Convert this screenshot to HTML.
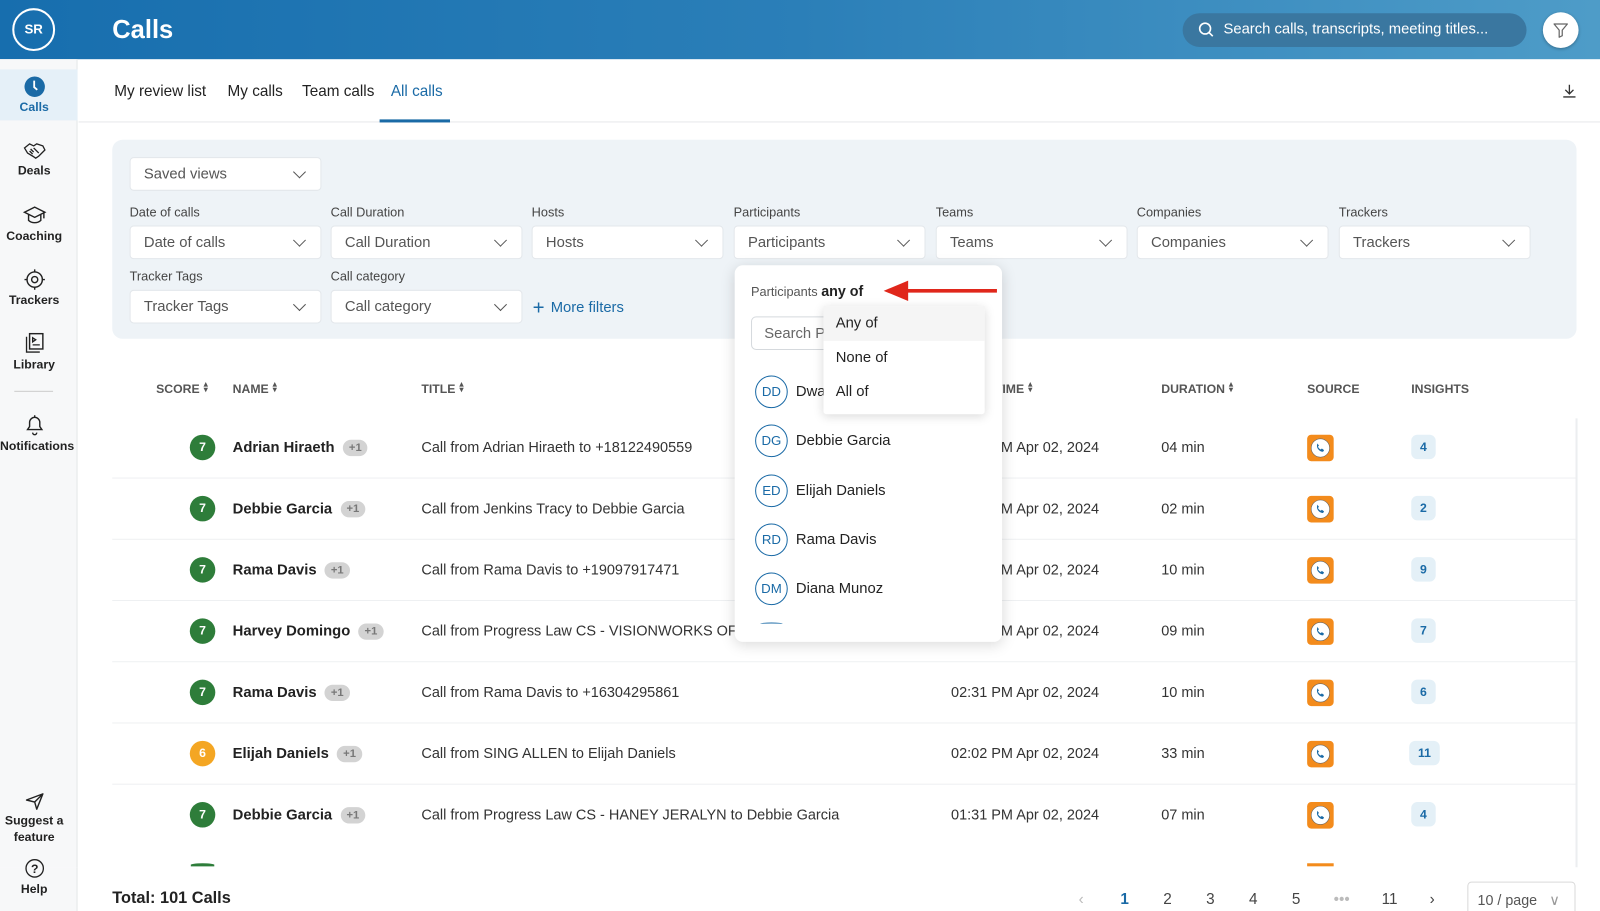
<!DOCTYPE html>
<html><head><meta charset="utf-8"><style>
*{box-sizing:border-box;margin:0;padding:0}
body{width:1600px;height:911px;overflow:hidden;background:#fff;font-family:"Liberation Sans",sans-serif;color:#222}
#w{position:absolute;left:0;top:0;width:1568px;height:893px;transform:scale(1.020408);transform-origin:0 0;overflow:hidden}
.a{position:absolute}
.hdr{left:0;top:0;width:1568px;height:58px;background:linear-gradient(90deg,#176eae,#2b7fb8 50%,#4e9cc8)}
.side{left:0;top:58px;width:76px;height:835px;background:#f7f8f9;border-right:1px solid #e4e6e8}
.si{position:absolute;left:0;width:67px;text-align:center;font-size:12px;font-weight:bold;color:#222}
.si svg{display:block;margin:0 auto 2px}
.tab{top:81px;font-size:15px;color:#222}
.panel{left:110px;top:137px;width:1435px;height:195px;background:#eef3f7;border-radius:10px}
.lbl{font-size:12.5px;color:#444}
.dd{width:188px;height:33px;background:#fff;border-radius:4px;border:1px solid #e3e7eb;font-size:14.5px;color:#555;padding:8px 13px}
.dd:after{content:"";position:absolute;right:16px;top:9px;width:8px;height:8px;border-right:1.5px solid #555;border-bottom:1.5px solid #555;transform:rotate(45deg)}
.th{top:374px;font-size:12px;font-weight:bold;color:#555}
.sort{display:inline-block;font-size:8px;vertical-align:1px;margin-left:4px;line-height:5px;width:6px}
.sc{width:25px;height:25px;border-radius:50%;background:#2e7d3a;color:#fff;font-size:12px;font-weight:bold;text-align:center;line-height:25px}
.nm{font-size:14.5px;font-weight:bold;color:#222}
.pl{display:inline-block;background:#d3d3d3;color:#777;font-size:11px;border-radius:9px;padding:2px 6px;margin-left:8px;vertical-align:1px;font-weight:bold}
.tt{font-size:14.2px;color:#333}
.src{width:26px;height:26px;background:#f38b1c;border-radius:4px}
.src svg{position:absolute;left:3px;top:3px}
.ins{width:24px;height:24px;background:#e4f0f7;border-radius:6px;color:#1a6aa6;font-size:12px;font-weight:bold;text-align:center;line-height:24px}
.line{height:1px;background:#eef0f2}
.pop{left:720px;top:260px;width:262px;height:369px;background:#fff;border-radius:8px;box-shadow:0 3px 14px rgba(0,0,0,.15);overflow:hidden}
.av{width:32px;height:32px;border-radius:50%;border:1.3px solid #1a6aa6;color:#1a6aa6;font-size:13px;text-align:center;line-height:29px}
.pn{font-size:14.5px;color:#222}
.sub{left:807px;top:300px;width:158px;height:106px;background:#fff;box-shadow:0 2px 10px rgba(0,0,0,.15);border-radius:3px}
.sub div{height:33.5px;padding:9px 12px;font-size:14.5px;color:#222}
.pg{top:873px;font-size:15px;color:#444}
</style></head><body><div id="w">
<div class="a hdr"></div>
<div class="a" style="left:12px;top:8px;width:42px;height:42px;border:2px solid #fff;border-radius:50%;color:#fff;font-size:13px;font-weight:bold;text-align:center;line-height:38px">SR</div>
<div class="a" style="left:110px;top:15px;color:#fff;font-size:25px;font-weight:bold">Calls</div>
<div class="a" style="left:1159px;top:13px;width:337px;height:33px;border-radius:17px;background:#3a77a0"></div>
<svg class="a" style="left:1174px;top:21px" width="16" height="16" viewBox="0 0 16 16"><circle cx="7" cy="7" r="5.3" fill="none" stroke="#fff" stroke-width="1.6"/><path d="M11 11l3.5 3.5" stroke="#fff" stroke-width="1.6"/></svg>
<div class="a" style="left:1199px;top:21px;color:#fff;font-size:14.5px">Search calls, transcripts, meeting titles...</div>
<div class="a" style="left:1512px;top:12px;width:35px;height:35px;border-radius:50%;background:#fff;box-shadow:0 1px 3px rgba(0,0,0,.3)"></div>
<svg class="a" style="left:1521px;top:21px" width="17" height="17" viewBox="0 0 17 17"><path d="M2 2.5h13l-5 6v5.5l-3 1.5v-7z" fill="none" stroke="#666" stroke-width="1.2" stroke-linejoin="round"/></svg>

<div class="a side"></div>
<div class="a" style="left:0;top:68px;width:76px;height:50px;background:#e5f0f8"></div>
<div class="si" style="top:74px;color:#1a6aa6"><svg width="22" height="22" viewBox="0 0 22 22"><circle cx="11" cy="11" r="10" fill="#1a6aa6"/><path d="M10.5 5v6.5l3 2.5" stroke="#fff" stroke-width="1.8" fill="none"/></svg>Calls</div>
<div class="si" style="top:138px"><svg width="24" height="20" viewBox="0 0 24 20"><path d="M2 7l5-4 4 2 3-2 6 2 2 4-6 6-3 2-3-2-5-3zM8 8l3 3M11 7l5 5M7 10l3 3" fill="none" stroke="#222" stroke-width="1.3"/></svg>Deals</div>
<div class="si" style="top:200px"><svg width="24" height="22" viewBox="0 0 24 22"><path d="M12 3L2 8l10 5 10-5zM6 10v6c3 3 9 3 12 0v-6M21 8v6" fill="none" stroke="#222" stroke-width="1.4"/></svg>Coaching</div>
<div class="si" style="top:263px"><svg width="24" height="22" viewBox="0 0 24 22"><circle cx="12" cy="11" r="7.5" fill="none" stroke="#222" stroke-width="1.4"/><circle cx="12" cy="11" r="3" fill="none" stroke="#222" stroke-width="1.4"/><path d="M12 1v3M12 18v3M2 11h3M19 11h3" stroke="#222" stroke-width="1.4"/></svg>Trackers</div>
<div class="si" style="top:325px"><svg width="24" height="23" viewBox="0 0 24 23"><rect x="7" y="2" width="13" height="15" fill="none" stroke="#222" stroke-width="1.4"/><path d="M4 5v15h13M10 6l3 2-3 2zM10 13h7" fill="none" stroke="#222" stroke-width="1.3"/></svg>Library</div>
<div class="a" style="left:14px;top:383px;width:38px;height:1px;background:#ccc"></div>
<div class="si" style="top:405px"><svg width="24" height="23" viewBox="0 0 24 23"><path d="M5 16h14l-2-3V9a5 5 0 0 0-10 0v4zM10 19a2 2 0 0 0 4 0M12 2v2" fill="none" stroke="#222" stroke-width="1.4"/></svg>Notifications</div>
<div class="si" style="top:776px;line-height:16px"><svg width="20" height="18" viewBox="0 0 20 18"><path d="M2 8L18 2 12 17 10 10zM10 10l8-8" fill="none" stroke="#222" stroke-width="1.4" stroke-linejoin="round"/></svg>Suggest a<br>feature</div>

<div class="a tab" style="left:112px">My review list</div>
<div class="a tab" style="left:223px">My calls</div>
<div class="a tab" style="left:296px">Team calls</div>
<div class="a tab" style="left:383px;color:#1a6aa6">All calls</div>
<div class="a" style="left:77px;top:119px;width:1491px;height:1px;background:#e6e8ea"></div>
<div class="a" style="left:372px;top:117px;width:69px;height:3px;background:#1a6aa6"></div>
<svg class="a" style="left:1530px;top:81px" width="16" height="16" viewBox="0 0 16 16"><path d="M8 2v9M4 7l4 4 4-4M2 14h12" fill="none" stroke="#333" stroke-width="1.3"/></svg>

<div class="a panel"></div>
<div class="a dd" style="left:127px;top:154px">Saved views</div>
<div class="a lbl" style="left:127px;top:201px">Date of calls</div><div class="a dd" style="left:127px;top:221px">Date of calls</div>
<div class="a lbl" style="left:324px;top:201px">Call Duration</div><div class="a dd" style="left:324px;top:221px">Call Duration</div>
<div class="a lbl" style="left:521px;top:201px">Hosts</div><div class="a dd" style="left:521px;top:221px">Hosts</div>
<div class="a lbl" style="left:719px;top:201px">Participants</div><div class="a dd" style="left:719px;top:221px">Participants</div>
<div class="a lbl" style="left:917px;top:201px">Teams</div><div class="a dd" style="left:917px;top:221px">Teams</div>
<div class="a lbl" style="left:1114px;top:201px">Companies</div><div class="a dd" style="left:1114px;top:221px">Companies</div>
<div class="a lbl" style="left:1312px;top:201px">Trackers</div><div class="a dd" style="left:1312px;top:221px">Trackers</div>
<div class="a lbl" style="left:127px;top:264px">Tracker Tags</div><div class="a dd" style="left:127px;top:284px">Tracker Tags</div>
<div class="a lbl" style="left:324px;top:264px">Call category</div><div class="a dd" style="left:324px;top:284px">Call category</div>
<div class="a" style="left:522px;top:291px;font-size:14.5px;color:#1a6aa6"><span style="font-size:20px;vertical-align:-2px;margin-right:6px">+</span>More filters</div>

<div class="a th" style="left:153px">SCORE<span class="sort">▴<br>▾</span></div>
<div class="a th" style="left:228px">NAME<span class="sort">▴<br>▾</span></div>
<div class="a th" style="left:413px">TITLE<span class="sort">▴<br>▾</span></div>
<div class="a th" style="left:975px">TIME<span class="sort">▴<br>▾</span></div>
<div class="a th" style="left:1138px">DURATION<span class="sort">▴<br>▾</span></div>
<div class="a th" style="left:1281px">SOURCE</div>
<div class="a th" style="left:1383px">INSIGHTS</div>
<div class="a" style="left:1544px;top:410px;width:2px;height:440px;background:#eceef0"></div>

<div class="a sc" style="left:186px;top:426px">7</div><div class="a nm" style="left:228px;top:431px">Adrian Hiraeth<span class="pl">+1</span></div><div class="a tt" style="left:413px;top:431px">Call from Adrian Hiraeth to +18122490559</div><div class="a tt" style="left:932px;top:431px">02:31 PM Apr 02, 2024</div><div class="a tt" style="left:1138px;top:431px">04 min</div><div class="a src" style="left:1281px;top:426px"><svg width="20" height="20" viewBox="0 0 20 20"><circle cx="10" cy="10" r="9" fill="#fff" stroke="#666" stroke-width=".6"/><path d="M7 5.5l1.6 2.2-1 1c.5 1.3 1.5 2.3 2.8 2.8l1-1 2.2 1.6-1 1.6c-3 .2-6.2-3-6-6z" fill="#1a6aa6"/></svg></div><div class="a ins" style="left:1383px;top:426px">4</div>
<div class="a line" style="left:110px;top:468px;width:1434px"></div>
<div class="a sc" style="left:186px;top:486px">7</div><div class="a nm" style="left:228px;top:491px">Debbie Garcia<span class="pl">+1</span></div><div class="a tt" style="left:413px;top:491px">Call from Jenkins Tracy to Debbie Garcia</div><div class="a tt" style="left:932px;top:491px">02:31 PM Apr 02, 2024</div><div class="a tt" style="left:1138px;top:491px">02 min</div><div class="a src" style="left:1281px;top:486px"><svg width="20" height="20" viewBox="0 0 20 20"><circle cx="10" cy="10" r="9" fill="#fff" stroke="#666" stroke-width=".6"/><path d="M7 5.5l1.6 2.2-1 1c.5 1.3 1.5 2.3 2.8 2.8l1-1 2.2 1.6-1 1.6c-3 .2-6.2-3-6-6z" fill="#1a6aa6"/></svg></div><div class="a ins" style="left:1383px;top:486px">2</div>
<div class="a line" style="left:110px;top:528px;width:1434px"></div>
<div class="a sc" style="left:186px;top:546px">7</div><div class="a nm" style="left:228px;top:551px">Rama Davis<span class="pl">+1</span></div><div class="a tt" style="left:413px;top:551px">Call from Rama Davis to +19097917471</div><div class="a tt" style="left:932px;top:551px">02:31 PM Apr 02, 2024</div><div class="a tt" style="left:1138px;top:551px">10 min</div><div class="a src" style="left:1281px;top:546px"><svg width="20" height="20" viewBox="0 0 20 20"><circle cx="10" cy="10" r="9" fill="#fff" stroke="#666" stroke-width=".6"/><path d="M7 5.5l1.6 2.2-1 1c.5 1.3 1.5 2.3 2.8 2.8l1-1 2.2 1.6-1 1.6c-3 .2-6.2-3-6-6z" fill="#1a6aa6"/></svg></div><div class="a ins" style="left:1383px;top:546px">9</div>
<div class="a line" style="left:110px;top:588px;width:1434px"></div>
<div class="a sc" style="left:186px;top:606px">7</div><div class="a nm" style="left:228px;top:611px">Harvey Domingo<span class="pl">+1</span></div><div class="a tt" style="left:413px;top:611px">Call from Progress Law CS - VISIONWORKS OF</div><div class="a tt" style="left:932px;top:611px">02:31 PM Apr 02, 2024</div><div class="a tt" style="left:1138px;top:611px">09 min</div><div class="a src" style="left:1281px;top:606px"><svg width="20" height="20" viewBox="0 0 20 20"><circle cx="10" cy="10" r="9" fill="#fff" stroke="#666" stroke-width=".6"/><path d="M7 5.5l1.6 2.2-1 1c.5 1.3 1.5 2.3 2.8 2.8l1-1 2.2 1.6-1 1.6c-3 .2-6.2-3-6-6z" fill="#1a6aa6"/></svg></div><div class="a ins" style="left:1383px;top:606px">7</div>
<div class="a line" style="left:110px;top:648px;width:1434px"></div>
<div class="a sc" style="left:186px;top:666px">7</div><div class="a nm" style="left:228px;top:671px">Rama Davis<span class="pl">+1</span></div><div class="a tt" style="left:413px;top:671px">Call from Rama Davis to +16304295861</div><div class="a tt" style="left:932px;top:671px">02:31 PM Apr 02, 2024</div><div class="a tt" style="left:1138px;top:671px">10 min</div><div class="a src" style="left:1281px;top:666px"><svg width="20" height="20" viewBox="0 0 20 20"><circle cx="10" cy="10" r="9" fill="#fff" stroke="#666" stroke-width=".6"/><path d="M7 5.5l1.6 2.2-1 1c.5 1.3 1.5 2.3 2.8 2.8l1-1 2.2 1.6-1 1.6c-3 .2-6.2-3-6-6z" fill="#1a6aa6"/></svg></div><div class="a ins" style="left:1383px;top:666px">6</div>
<div class="a line" style="left:110px;top:708px;width:1434px"></div>
<div class="a sc" style="left:186px;top:726px;background:#f4a623">6</div><div class="a nm" style="left:228px;top:731px">Elijah Daniels<span class="pl">+1</span></div><div class="a tt" style="left:413px;top:731px">Call from SING ALLEN to Elijah Daniels</div><div class="a tt" style="left:932px;top:731px">02:02 PM Apr 02, 2024</div><div class="a tt" style="left:1138px;top:731px">33 min</div><div class="a src" style="left:1281px;top:726px"><svg width="20" height="20" viewBox="0 0 20 20"><circle cx="10" cy="10" r="9" fill="#fff" stroke="#666" stroke-width=".6"/><path d="M7 5.5l1.6 2.2-1 1c.5 1.3 1.5 2.3 2.8 2.8l1-1 2.2 1.6-1 1.6c-3 .2-6.2-3-6-6z" fill="#1a6aa6"/></svg></div><div class="a ins" style="left:1381px;top:726px;width:30px">11</div>
<div class="a line" style="left:110px;top:768px;width:1434px"></div>
<div class="a sc" style="left:186px;top:786px">7</div><div class="a nm" style="left:228px;top:791px">Debbie Garcia<span class="pl">+1</span></div><div class="a tt" style="left:413px;top:791px">Call from Progress Law CS - HANEY JERALYN to Debbie Garcia</div><div class="a tt" style="left:932px;top:791px">01:31 PM Apr 02, 2024</div><div class="a tt" style="left:1138px;top:791px">07 min</div><div class="a src" style="left:1281px;top:786px"><svg width="20" height="20" viewBox="0 0 20 20"><circle cx="10" cy="10" r="9" fill="#fff" stroke="#666" stroke-width=".6"/><path d="M7 5.5l1.6 2.2-1 1c.5 1.3 1.5 2.3 2.8 2.8l1-1 2.2 1.6-1 1.6c-3 .2-6.2-3-6-6z" fill="#1a6aa6"/></svg></div><div class="a ins" style="left:1383px;top:786px">4</div>
<div class="a" style="left:187px;top:846px;width:23px;height:3px;border-radius:50% 50% 0 0;background:#2e7d3a"></div>
<div class="a" style="left:1281px;top:846px;width:26px;height:3px;background:#f38b1c"></div>
<div class="a" style="left:0;top:850px;width:1568px;height:43px;background:#fff"></div>
<div class="a side" style="top:850px;height:43px"></div>
<div class="si" style="top:841px"><svg width="22" height="21" viewBox="0 0 22 21"><circle cx="11" cy="10" r="8.5" fill="none" stroke="#222" stroke-width="1.3"/><text x="11" y="14.5" font-size="12" text-anchor="middle" font-family="Liberation Sans" fill="#222">?</text></svg>Help</div>

<div class="a" style="left:110px;top:872px;font-size:16px;font-weight:bold;color:#222">Total: 101 Calls</div>
<div class="a pg" style="left:1057px;color:#bbb">‹</div>
<div class="a pg" style="left:1098px;color:#1a6aa6;font-weight:bold">1</div>
<div class="a pg" style="left:1140px">2</div>
<div class="a pg" style="left:1182px">3</div>
<div class="a pg" style="left:1224px">4</div>
<div class="a pg" style="left:1266px">5</div>
<div class="a pg" style="left:1307px;color:#bbb">•••</div>
<div class="a pg" style="left:1354px">11</div>
<div class="a pg" style="left:1401px">›</div>
<div class="a" style="left:1438px;top:864px;width:106px;height:34px;border:1px solid #d9d9d9;border-radius:4px;font-size:14px;color:#555;padding:9px 9px">10 / page <span style="color:#999;margin-left:8px">∨</span></div>

<div class="a pop"></div>
<div class="a" style="left:736px;top:277px;font-size:12.5px;color:#555">Participants <b style="font-size:14px;color:#222">any of</b></div>
<svg class="a" style="left:864px;top:272px" width="116" height="26" viewBox="0 0 116 26"><path d="M22 13H113" stroke="#e0271b" stroke-width="3.5"/><path d="M2 13L26 3v20z" fill="#e0271b"/></svg>
<div class="a" style="left:736px;top:310px;width:120px;height:33px;border:1px solid #d5d9dd;border-radius:5px;font-size:14.5px;color:#666;padding:8px 12px">Search Pa</div>
<div class="a av" style="left:740px;top:368px">DD</div><div class="a pn" style="left:780px;top:376px">Dwa</div>
<div class="a av" style="left:740px;top:416px">DG</div><div class="a pn" style="left:780px;top:424px">Debbie Garcia</div>
<div class="a av" style="left:740px;top:465px">ED</div><div class="a pn" style="left:780px;top:473px">Elijah Daniels</div>
<div class="a av" style="left:740px;top:513px">RD</div><div class="a pn" style="left:780px;top:521px">Rama Davis</div>
<div class="a av" style="left:740px;top:561px">DM</div><div class="a pn" style="left:780px;top:569px">Diana Munoz</div>
<div class="a" style="left:745px;top:610px;width:22px;height:3px;border-top:1.3px solid #1a6aa6;border-radius:50% 50% 0 0"></div>
<div class="a sub"><div style="background:#f5f5f5">Any of</div><div>None of</div><div>All of</div></div>
</div></body></html>
